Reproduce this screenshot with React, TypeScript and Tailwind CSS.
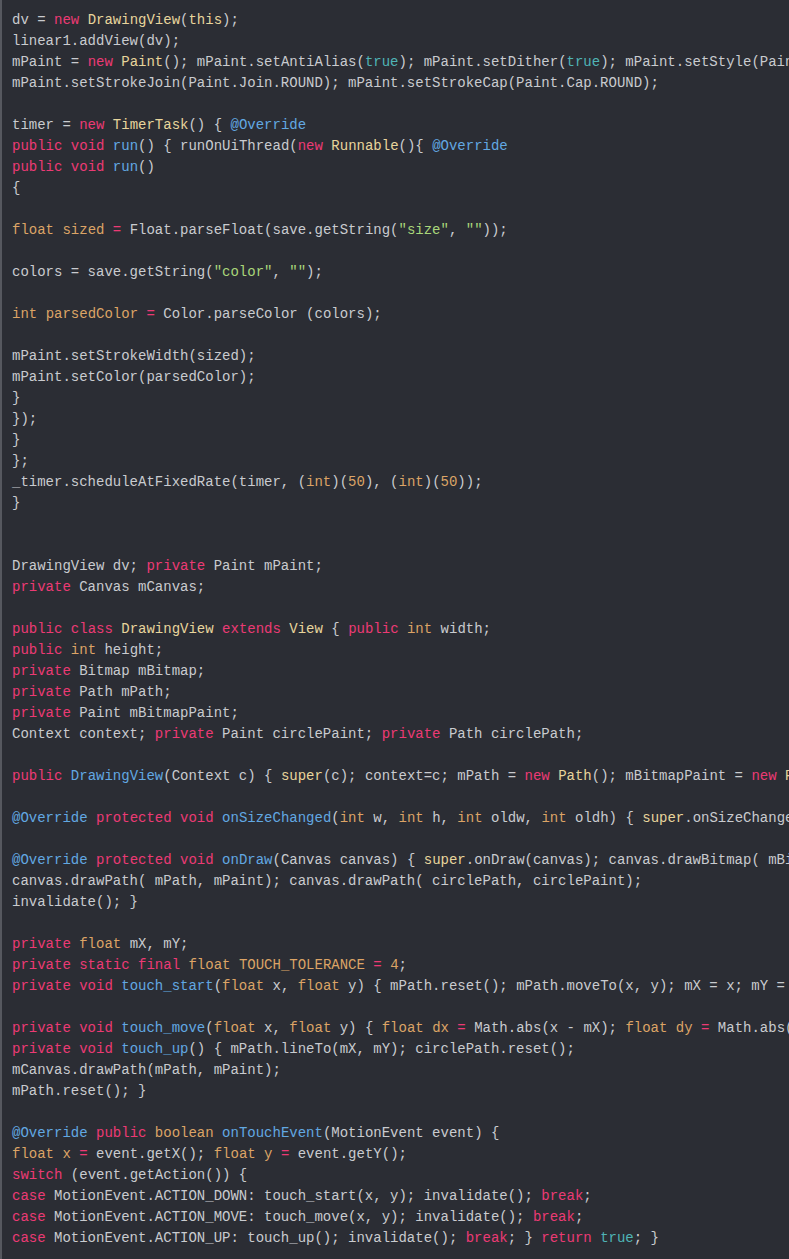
const tone: Record<string, string> = {
  k: 'text-[#ec3a74]',
  t: 'text-[#dca466]',
  c: 'text-[#e8d59c]',
  f: 'text-[#62a8e2]',
  s: 'text-[#a9d67a]',
  b: 'text-[#4fb4b6]',
};

// [k|word] marks a highlighted token, everything else is plain text
const source = [
  'dv = [k|new] [c|DrawingView]([c|this]);',
  'linear1.addView(dv);',
  'mPaint = [k|new] [c|Paint](); mPaint.setAntiAlias([b|true]); mPaint.setDither([b|true]); mPaint.setStyle(Paint.Style.STROKE);',
  'mPaint.setStrokeJoin(Paint.Join.ROUND); mPaint.setStrokeCap(Paint.Cap.ROUND);',
  '',
  'timer = [k|new] [c|TimerTask]() { [f|@Override]',
  '[k|public] [k|void] [f|run]() { runOnUiThread([k|new] [c|Runnable](){ [f|@Override]',
  '[k|public] [k|void] [f|run]()',
  '{',
  '',
  '[t|float] [t|sized] [k|=] Float.parseFloat(save.getString([s|"size"], [s|""]));',
  '',
  'colors = save.getString([s|"color"], [s|""]);',
  '',
  '[t|int] [t|parsedColor] [k|=] Color.parseColor (colors);',
  '',
  'mPaint.setStrokeWidth(sized);',
  'mPaint.setColor(parsedColor);',
  '}',
  '});',
  '}',
  '};',
  '_timer.scheduleAtFixedRate(timer, ([t|int])([t|50]), ([t|int])([t|50]));',
  '}',
  '',
  '',
  'DrawingView dv; [k|private] Paint mPaint;',
  '[k|private] Canvas mCanvas;',
  '',
  '[k|public] [k|class] [c|DrawingView] [k|extends] [c|View] { [k|public] [t|int] width;',
  '[k|public] [t|int] height;',
  '[k|private] Bitmap mBitmap;',
  '[k|private] Path mPath;',
  '[k|private] Paint mBitmapPaint;',
  'Context context; [k|private] Paint circlePaint; [k|private] Path circlePath;',
  '',
  '[k|public] [f|DrawingView](Context c) { [c|super](c); context=c; mPath = [k|new] [c|Path](); mBitmapPaint = [k|new] [c|Paint](Paint.DITHER_FLAG); }',
  '',
  '[f|@Override] [k|protected] [k|void] [f|onSizeChanged]([t|int] w, [t|int] h, [t|int] oldw, [t|int] oldh) { [c|super].onSizeChanged(w, h, oldw, oldh); }',
  '',
  '[f|@Override] [k|protected] [k|void] [f|onDraw](Canvas canvas) { [c|super].onDraw(canvas); canvas.drawBitmap( mBitmap, [t|0], [t|0], mBitmapPaint);',
  'canvas.drawPath( mPath, mPaint); canvas.drawPath( circlePath, circlePaint);',
  'invalidate(); }',
  '',
  '[k|private] [t|float] mX, mY;',
  '[k|private] [k|static] [k|final] [t|float] [t|TOUCH_TOLERANCE] [k|=] [t|4];',
  '[k|private] [k|void] [f|touch_start]([t|float] x, [t|float] y) { mPath.reset(); mPath.moveTo(x, y); mX = x; mY = y; }',
  '',
  '[k|private] [k|void] [f|touch_move]([t|float] x, [t|float] y) { [t|float] [t|dx] [k|=] Math.abs(x - mX); [t|float] [t|dy] [k|=] Math.abs(y - mY); }',
  '[k|private] [k|void] [f|touch_up]() { mPath.lineTo(mX, mY); circlePath.reset();',
  'mCanvas.drawPath(mPath, mPaint);',
  'mPath.reset(); }',
  '',
  '[f|@Override] [k|public] [t|boolean] [f|onTouchEvent](MotionEvent event) {',
  '[t|float] [t|x] [k|=] event.getX(); [t|float] [t|y] [k|=] event.getY();',
  '[k|switch] (event.getAction()) {',
  '[k|case] MotionEvent.ACTION_DOWN: touch_start(x, y); invalidate(); [k|break];',
  '[k|case] MotionEvent.ACTION_MOVE: touch_move(x, y); invalidate(); [k|break];',
  '[k|case] MotionEvent.ACTION_UP: touch_up(); invalidate(); [k|break]; } [k|return] [b|true]; }',
  '',
];

function CodeLine({ text }: { text: string }) {
  const parts: React.ReactNode[] = [];
  const re = /\[(\w)\|([^\]]*)\]/g;
  let last = 0;
  let m: RegExpExecArray | null;
  let i = 0;
  while ((m = re.exec(text))) {
    if (m.index > last) parts.push(text.slice(last, m.index));
    parts.push(
      <span key={i++} className={tone[m[1]]}>
        {m[2]}
      </span>
    );
    last = m.index + m[0].length;
  }
  if (last < text.length) parts.push(text.slice(last));
  return <div className="h-[21px]">{parts.length ? parts : ' '}</div>;
}

export default function App() {
  return (
    <div className="min-h-screen w-full overflow-hidden bg-[#2b2d34]">
      <pre className="min-h-screen border-l-2 border-[#56585f] pl-[10px] pt-[10px] font-['Liberation_Mono',monospace] text-[14px] leading-[21px] text-[#c9cbcf] whitespace-pre">
        {source.map((line, idx) => (
          <CodeLine key={idx} text={line} />
        ))}
      </pre>
    </div>
  );
}
